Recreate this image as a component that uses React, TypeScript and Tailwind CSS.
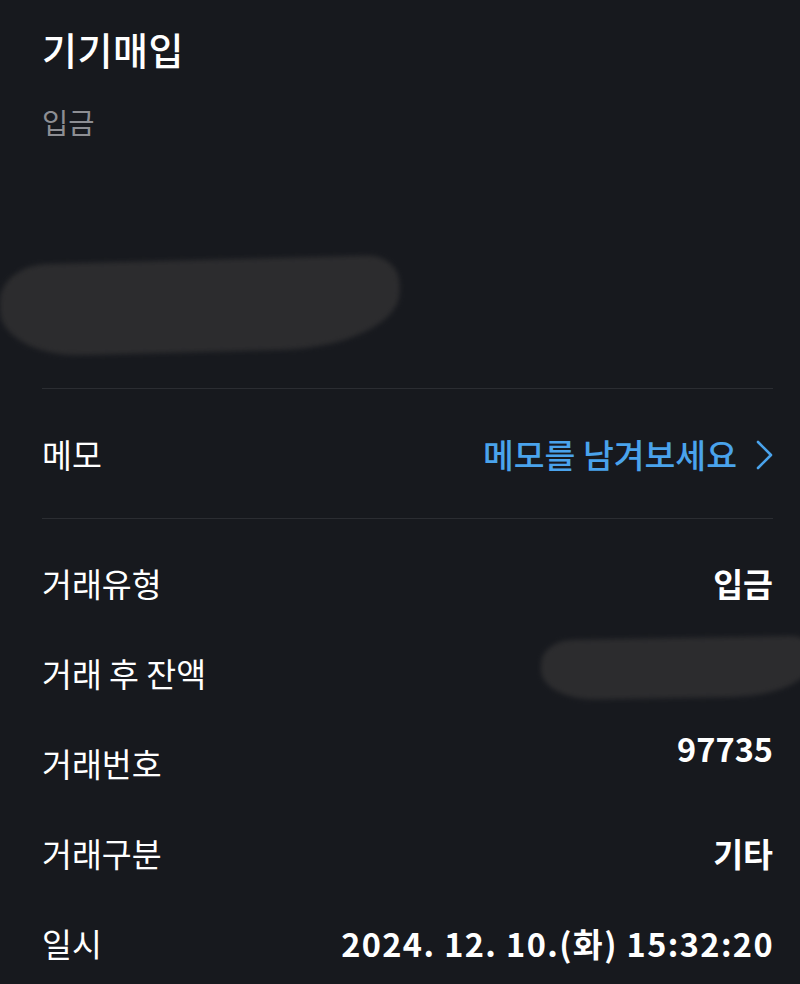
const FONT = "font-['Noto_Sans_CJK_KR','Noto_Sans',sans-serif]";

function Smear({ className }: { className: string }) {
  return (
    <div
      className={`bg-[#2c2c2e] blur-[2.5px] rounded-[12%_8%_30%_20%/40%_30%_60%_50%] ${className}`}
    />
  );
}

const ROWS: Array<{ label: string; value?: string; lifted?: boolean; hidden?: boolean; wide?: boolean }> = [
  { label: "거래유형", value: "입금" },
  { label: "거래 후 잔액", hidden: true },
  { label: "거래번호", value: "97735", lifted: true },
  { label: "거래구분", value: "기타" },
  { label: "일시", value: "2024. 12. 10.(화) 15:32:20", wide: true },
];

export default function App() {
  return (
    <div className={`h-[984px] overflow-hidden bg-[#17191e] text-white ${FONT}`}>
      <div className="pl-[42px] pr-[27px] pt-[25px]">
        <div className="text-[38px] leading-[48px] font-medium tracking-[0.5px]">기기매입</div>
        <div className="mt-[31px] text-[28.5px] leading-[36px] text-[#8d8e93]">입금</div>
        <Smear className="-ml-[42px] mt-[120px] h-[92px] w-[400px] -rotate-[1.5deg]" />
        <div className="mt-[36px] h-px bg-[#2b2d32]" />

        <div className="flex h-[129px] items-center justify-between">
          <div className="text-[32.5px] leading-[40px]">메모</div>
          <div className="flex items-center gap-[19px] text-[33.5px] leading-[40px] font-medium text-[#4aa3ec]">
            <span>메모를 남겨보세요</span>
            <svg width="17" height="30" viewBox="0 0 17 30" fill="none" className="mt-[2px]">
              <path d="M2 2 L15 15 L2 28" stroke="currentColor" strokeWidth="2.6" strokeLinecap="round" strokeLinejoin="round" />
            </svg>
          </div>
        </div>
        <div className="h-px bg-[#2b2d32]" />

        <div className="pt-[19px]">
          {ROWS.map((row) => (
            <div key={row.label} className="flex h-[90px] items-center justify-between">
              <div className="text-[32.5px] leading-[40px] whitespace-nowrap">{row.label}</div>
              {row.hidden ? (
                <Smear className="-mr-[40px] mt-[-10px] h-[60px] w-[272px] -rotate-[1deg]" />
              ) : (
                <div
                  className={`text-[32.5px] leading-[40px] font-semibold whitespace-nowrap ${row.lifted ? "pb-[30px]" : ""} ${row.wide ? "tracking-[1.4px] -mr-[1px]" : ""}`}
                >
                  {row.value}
                </div>
              )}
            </div>
          ))}
        </div>
      </div>
    </div>
  );
}
